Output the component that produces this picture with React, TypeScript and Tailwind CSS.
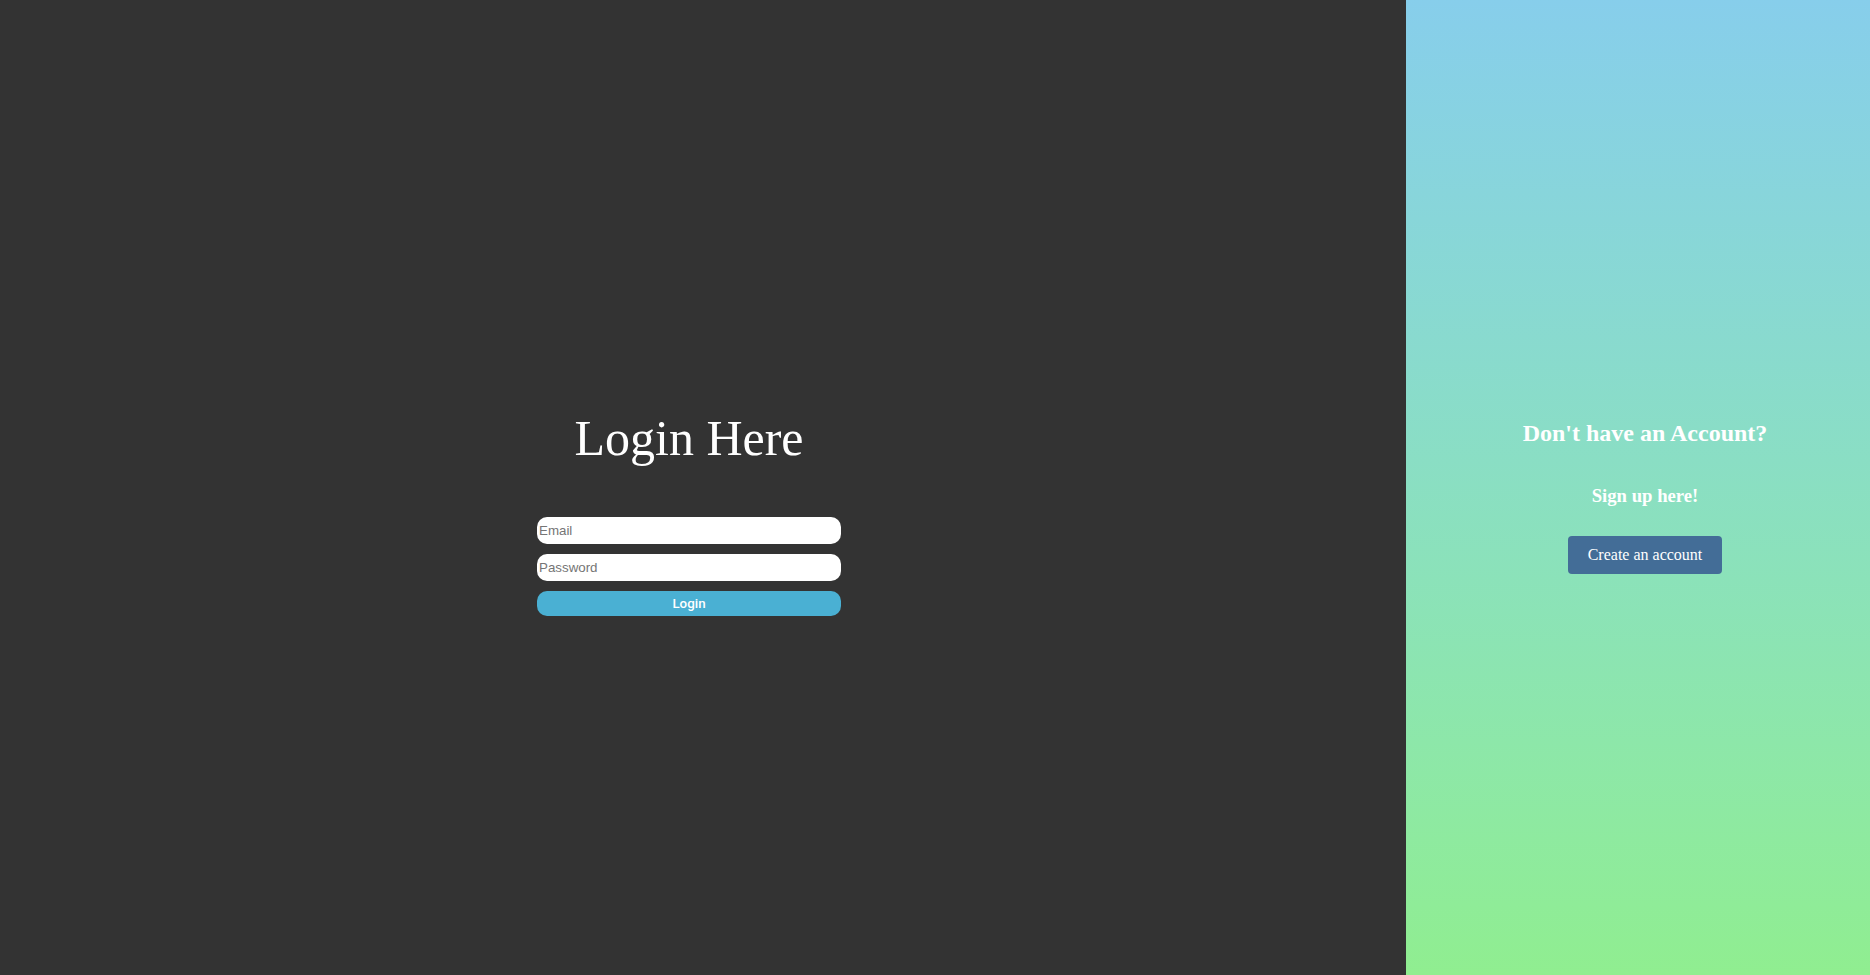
import { useState } from "react";

const serif = { fontFamily: '"Liberation Serif", "Times New Roman", serif' };

function LoginForm() {
  const [email, setEmail] = useState("");
  const [password, setPassword] = useState("");

  return (
    <div className="flex flex-col items-center" style={serif}>
      <h1 className="text-[50px] leading-[57px] font-normal text-white">Login Here</h1>
      <form
        className="mt-[50px] flex w-[304px] flex-col gap-[10px] font-['Liberation_Sans',Arial,sans-serif]"
        onSubmit={(e) => e.preventDefault()}
      >
        <input
          type="email"
          placeholder="Email"
          value={email}
          onChange={(e) => setEmail(e.target.value)}
          className="h-[27px] w-full rounded-[10px] bg-white px-[2px] text-[13.33px] text-black outline-none placeholder:text-[#757575]"
        />
        <input
          type="password"
          placeholder="Password"
          value={password}
          onChange={(e) => setPassword(e.target.value)}
          className="h-[27px] w-full rounded-[10px] bg-white px-[2px] text-[13.33px] text-black outline-none placeholder:text-[#757575]"
        />
        <button
          type="submit"
          className="h-[25px] w-full rounded-[10px] bg-[#4ab0d3] font-['Roboto',Arial,sans-serif] text-[13.33px] font-medium text-white"
        >
          Login
        </button>
      </form>
    </div>
  );
}

function SignupPanel() {
  return (
    <div className="flex flex-col items-center text-white" style={serif}>
      <h2 className="text-[24px] leading-[28px] font-bold">Don't have an Account?</h2>
      <h3 className="mt-[38px] text-[18.72px] leading-[22px] font-bold">Sign up here!</h3>
      <button
        type="button"
        className="mt-[29px] h-[38px] rounded-[4px] bg-[#436d97] px-[20px] text-[16px] text-white"
      >
        Create an account
      </button>
    </div>
  );
}

export default function App() {
  return (
    <div className="flex h-[975px] w-full overflow-hidden">
      <div className="flex flex-1 items-center justify-center bg-[#333333] pt-[51px] pr-[28px]">
        <LoginForm />
      </div>
      <div className="flex w-[464px] items-center justify-center bg-linear-to-b from-[#87ceeb] to-[#90ee90] pt-[17px] pl-[14px]">
        <SignupPanel />
      </div>
    </div>
  );
}
